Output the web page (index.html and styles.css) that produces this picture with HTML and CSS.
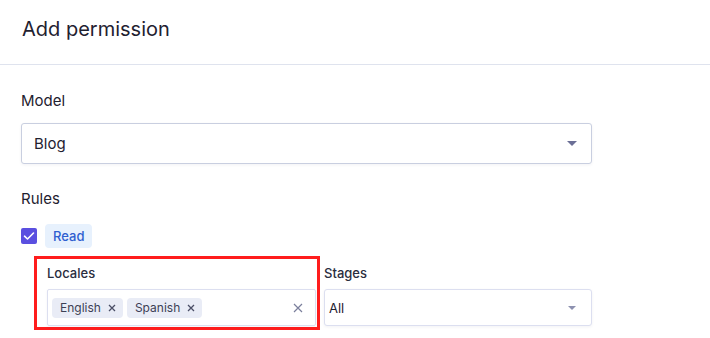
FILE: index.html
```html
<!DOCTYPE html>
<html lang="en">
<head>
  <meta charset="UTF-8">
  <title>Add permission</title>
  <link rel="stylesheet" href="styles.css">
</head>
<body>
  <div class="dialog">
    <div class="dialog-header">
      <h2 class="dialog-title">Add permission</h2>
    </div>
    <div class="dialog-body">
      <div class="field">
        <div class="field-label">Model</div>
        <div class="select select-lg">
          <span class="select-value">Blog</span>
          <span class="caret caret-lg"></span>
        </div>
      </div>
      <div class="rules">
        <div class="field-label">Rules</div>
        <div class="rule-row">
          <span class="checkbox">
            <svg width="12" height="10" viewBox="0 0 12 10"><path d="M1.5 5.2 L4.5 8 L10.5 2" fill="none" stroke="#fff" stroke-width="1.6" stroke-linecap="round" stroke-linejoin="round"/></svg>
          </span>
          <span class="badge">Read</span>
        </div>
        <div class="rule-fields">
          <div class="sub-field highlighted">
            <div class="sub-label">Locales</div>
            <div class="multi-select">
              <span class="tag">English
                <svg class="tag-x" width="8" height="8" viewBox="0 0 8 8"><path d="M1 1 L7 7 M7 1 L1 7" stroke="#4a4e66" stroke-width="1.3"/></svg>
              </span>
              <span class="tag">Spanish
                <svg class="tag-x" width="8" height="8" viewBox="0 0 8 8"><path d="M1 1 L7 7 M7 1 L1 7" stroke="#4a4e66" stroke-width="1.3"/></svg>
              </span>
              <svg class="clear-x" width="10" height="10" viewBox="0 0 10 10"><path d="M1 1 L9 9 M9 1 L1 9" stroke="#7b7f9c" stroke-width="1.2"/></svg>
            </div>
          </div>
          <div class="sub-field">
            <div class="sub-label">Stages</div>
            <div class="select select-sm">
              <span class="select-value">All</span>
              <span class="caret caret-sm"></span>
            </div>
          </div>
        </div>
      </div>
    </div>
  </div>
</body>
</html>
```

FILE: styles.css
```css
* { box-sizing: border-box; }
html, body {
  margin: 0;
  padding: 0;
}
body {
  background: #fff;
  font-family: 'Inter', 'Noto Sans', sans-serif;
  color: #1f2130;
}
.dialog-header {
  height: 65px;
  border-bottom: 1px solid #dfe3ee;
  padding: 0 22px;
  display: flex;
  align-items: center;
}
.dialog-title {
  margin: 0;
  margin-top: -6px;
  font-size: 20px;
  font-weight: 400;
  color: #1f2130;
}
.dialog-body {
  padding: 26px 118px 0 21px;
}
.field-label {
  font-size: 15px;
  line-height: 20px;
  color: #1f2130;
  margin-bottom: 12px;
}
.select {
  display: flex;
  align-items: center;
  justify-content: space-between;
  background: #fff;
  border: 1px solid #c9cfe0;
  border-radius: 3px;
  box-shadow: 0 1px 3px rgba(30, 40, 80, 0.06);
}
.select-lg {
  height: 41px;
  padding: 0 14px 0 12px;
  font-size: 15px;
}
.select-sm {
  height: 37px;
  padding: 0 14px 0 4px;
  font-size: 13px;
  border-color: #dcdff0;
}
.caret {
  width: 0;
  height: 0;
  border-left: 5px solid transparent;
  border-right: 5px solid transparent;
  border-top: 5px solid #6b6f96;
}
.caret-sm {
  border-left-width: 4px;
  border-right-width: 4px;
  border-top-width: 4px;
  border-top-color: #8d91b0;
  margin-right: 1px;
}
.rules {
  margin-top: 25px;
}
.rules .field-label {
  margin-bottom: 15px;
}
.rule-row {
  display: flex;
  align-items: center;
  gap: 8px;
}
.checkbox {
  width: 16px;
  height: 16px;
  border-radius: 2px;
  background: #5a4fe0;
  display: flex;
  align-items: center;
  justify-content: center;
}
.badge {
  background: #e7f1fd;
  color: #2f5fd0;
  font-size: 13px;
  font-weight: 500;
  padding: 4px 8px;
  border-radius: 4px;
  line-height: 16px;
}
.rule-fields {
  display: flex;
  margin-top: 8px;
  margin-left: 13px;
  gap: 4px;
}
.sub-field {
  width: 268px;
}
.sub-field.highlighted {
  width: 286px;
  border: 3px solid #ff1d1d;
  padding: 6px 1px 1px 10px;
}
.sub-field:not(.highlighted) {
  padding-top: 9px;
}
.sub-label {
  font-size: 13px;
  font-weight: 500;
  color: #2a2d3e;
  line-height: 16px;
  margin-bottom: 8px;
}
.multi-select {
  height: 37px;
  display: flex;
  align-items: center;
  gap: 4px;
  padding: 0 4px;
  border: 1px solid #dcdff0;
  border-radius: 2px;
  box-shadow: 0 1px 3px rgba(30, 40, 80, 0.05);
}
.tag {
  background: #e9ecf6;
  color: #3c3f55;
  font-size: 12px;
  border-radius: 4px;
  padding: 2px 7px 2px 8px;
  line-height: 16px;
  display: flex;
  align-items: center;
  gap: 7px;
}
.clear-x {
  margin-left: auto;
  margin-right: 8px;
}
```
